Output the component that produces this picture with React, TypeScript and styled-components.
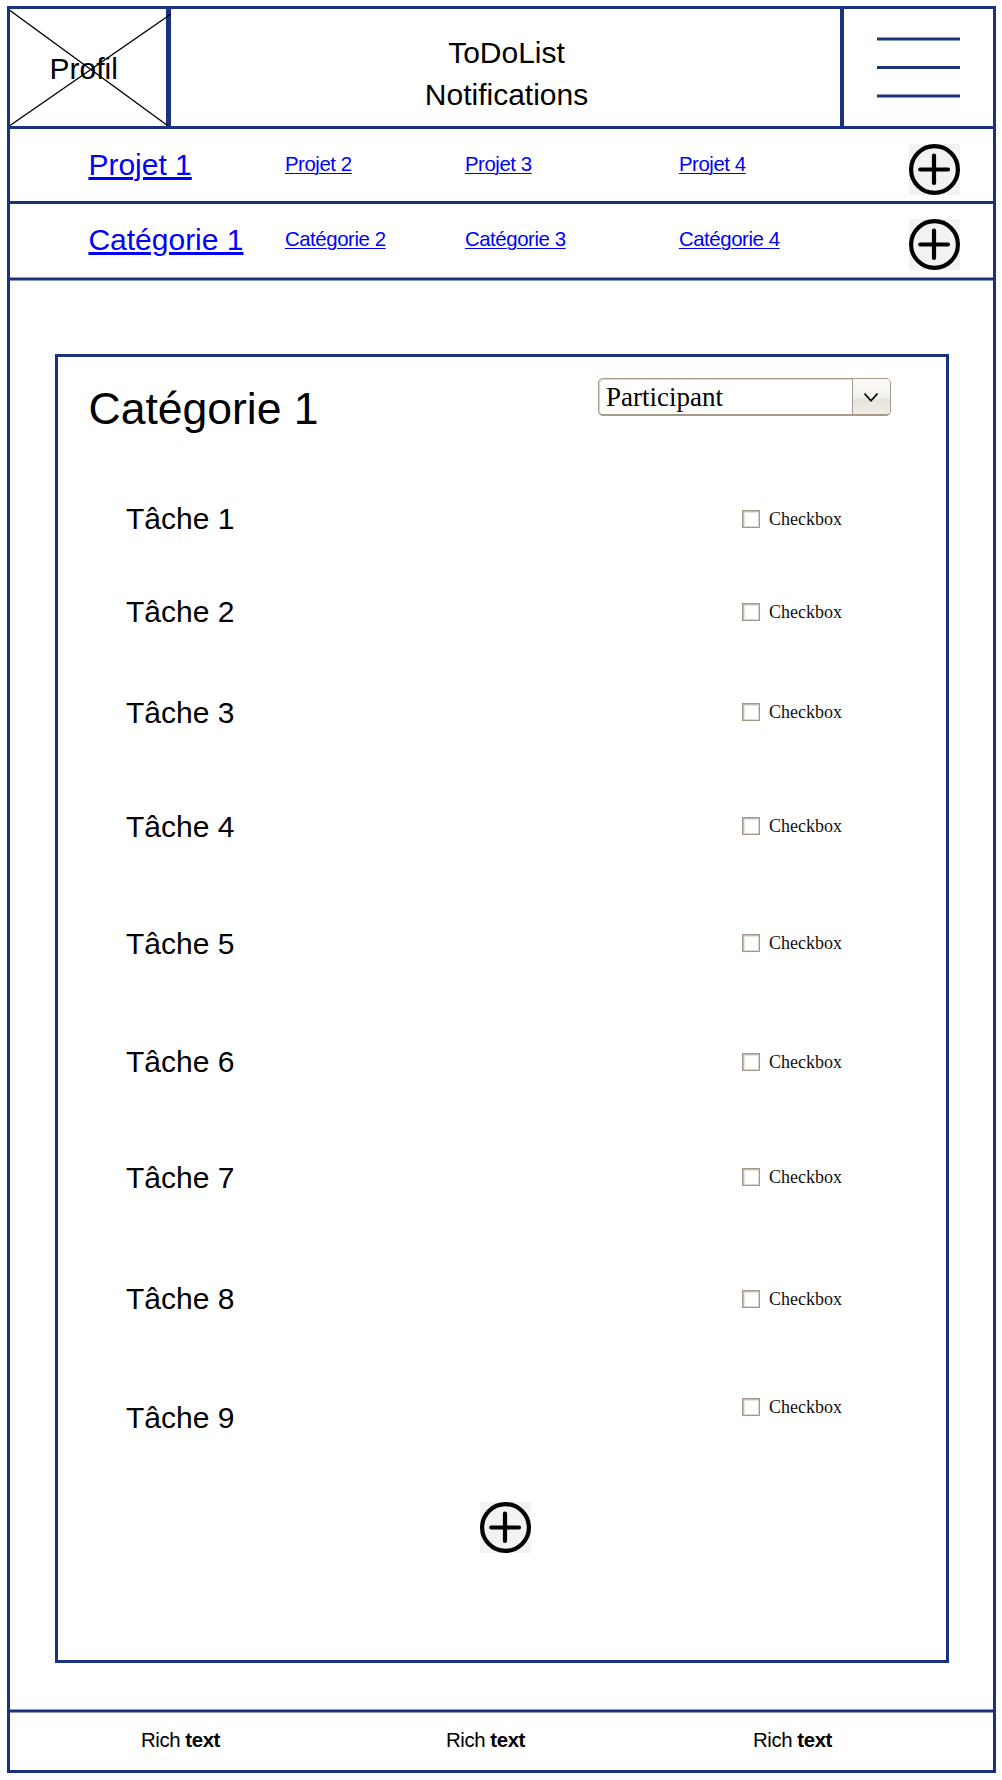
import React from "react";
import styled, { createGlobalStyle } from "styled-components";

const NAVY = "#1b3281";
const SANS = `"Liberation Sans", Arial, sans-serif`;
const SERIF = `"Liberation Serif", "Times New Roman", serif`;

const GlobalStyle = createGlobalStyle`
  * { box-sizing: border-box; }
  body { margin: 0; background: #fff; color: #000; font-family: ${SANS}; }
  h1, h2, p, ul { margin: 0; padding: 0; font-weight: 400; list-style: none; }
  button { border: 0; padding: 0; background: none; }
`;

const Page = styled.div`
  width: 1002px;
  height: 1780px;
  padding: 6px 6px 7px 7px;
`;

const Frame = styled.div`
  display: flex;
  flex-direction: column;
  width: 989px;
  height: 1767px;
  border: 3px solid ${NAVY};
`;

const Header = styled.header`
  display: flex;
  height: 120px;
  border-bottom: 3px solid ${NAVY};
`;

const Profile = styled.div`
  position: relative;
  width: 161px;
  border-right: 5px solid ${NAVY};
  padding: 39px 0 0 39.5px;
  font-size: 30px;
  line-height: 42px;
`;

const Cross = styled.svg`
  position: absolute;
  left: 0;
  top: 0;
  overflow: visible;
`;

const Heading = styled.div`
  width: 669px;
  padding: 23px 0 0 2px;
  text-align: center;
  font-size: 30px;
  line-height: 42px;
`;

const Menu = styled.button`
  display: flex;
  flex: 1;
  flex-direction: column;
  align-items: flex-start;
  gap: 25px;
  padding: 28px 0 0 33px;
  border-left: 4px solid ${NAVY};
`;

const Line = styled.span<{ $soft?: boolean }>`
  display: block;
  flex: none;
  width: 83px;
  height: ${(p) => (p.$soft ? 4 : 3)}px;
  background: ${(p) =>
    p.$soft
      ? `linear-gradient(#8d98c0 1px, ${NAVY} 1px 3px, #8d98c0 3px)`
      : NAVY};
`;

const Divider = styled(Line)`
  width: 100%;
`;

const NavRow = styled.nav<{ $height: number }>`
  display: grid;
  grid-template-columns: 196.5px 180px 214px 1fr 51px;
  height: ${(p) => p.$height}px;
  padding: 0 33px 0 78.4px;
`;

const NavLink = styled.a<{ $active?: boolean }>`
  color: #00f;
  font-size: ${(p) => (p.$active ? 30 : 20.4)}px;
  letter-spacing: ${(p) => (p.$active ? 0 : -0.43)}px;
  line-height: ${(p) => (p.$active ? 42 : 28)}px;
  padding-top: ${(p) => (p.$active ? 14.5 : 21)}px;
  text-decoration: underline;
  text-decoration-thickness: ${(p) => (p.$active ? 3 : 1)}px;
  text-underline-offset: 2px;
  white-space: nowrap;
`;

const AddButton = styled.button`
  display: block;
  width: 51px;
  height: 51px;
  background: #f2f2f2;
`;

const NavAdd = styled(AddButton)`
  margin-top: 15px;
`;

const Main = styled.main`
  flex: 1;
  padding: 73px 44px 46px 45px;
`;

const Card = styled.section`
  width: 894px;
  height: 1309px;
  border: 3px solid ${NAVY};
`;

const CardHeader = styled.div`
  display: flex;
  justify-content: space-between;
  height: 141px;
  padding: 21px 55px 0 30.5px;
`;

const Title = styled.h1`
  font-size: 44.5px;
  line-height: 62px;
`;

const Select = styled.div`
  display: flex;
  width: 293px;
  height: 38px;
  border: 1.5px solid #a69a8a;
  border-bottom-width: 2px;
  border-radius: 5px;
  background: #fff;
  box-shadow: inset 1px 1px 1px #d5d2cc;
  overflow: hidden;
`;

const SelectValue = styled.span`
  flex: 1;
  padding-left: 7px;
  font: 27px/37px ${SERIF};
`;

const SelectArrow = styled.span`
  display: flex;
  align-items: center;
  justify-content: center;
  width: 38px;
  padding: 1px 1px 0 0;
  border-left: 1px solid #a69a8a;
  background: linear-gradient(#fbfaf8, #f3f1ed 50%, #e7e3db 60%, #f0eee9);
`;

const TaskRow = styled.li<{ $height: number; $checkShift?: number }>`
  display: flex;
  justify-content: space-between;
  align-items: flex-start;
  height: ${(p) => p.$height}px;
  padding: 0 103px 0 68px;

  > label {
    margin-top: ${(p) => 10 - (p.$checkShift ?? 0)}px;
  }
`;

const TaskName = styled.span`
  font-size: 30px;
  line-height: 42px;
`;

const Check = styled.label`
  display: flex;
  align-items: center;
  gap: 9px;
  width: 101px;
  height: 22px;
  font: 18px/22px ${SERIF};
  color: #111;
  white-space: nowrap;
`;

const Box = styled.input`
  appearance: none;
  flex: none;
  width: 18px;
  height: 18px;
  margin: 0;
  border: 1px solid #a3978a;
  box-shadow: inset 1px 1px 0 #c4bcb2, inset -1px -1px 0 #ddd7d0,
    inset 2px 2px 0 #e6e4e1;
  background: #fff;
`;

const CardAdd = styled(AddButton)`
  margin-left: 422px;
`;

const Footer = styled.footer`
  display: grid;
  grid-template-columns: 305px 307px 1fr;
  height: 57px;
  padding: 13px 0 0 131px;
  font-size: 20.4px;
  letter-spacing: -0.42px;
  line-height: 28px;
`;

const PlusIcon = () => (
  <svg width="51" height="51" viewBox="0 0 51 51" fill="none" stroke="#000">
    <circle cx="25.5" cy="25.5" r="23.4" strokeWidth="4.2" />
    <path d="M11.2 25.5H39M25 11.5V39" strokeWidth="4.2" strokeLinecap="round" />
  </svg>
);

const projects = ["Projet 1", "Projet 2", "Projet 3", "Projet 4"];
const categories = ["Catégorie 1", "Catégorie 2", "Catégorie 3", "Catégorie 4"];

const tasks = [
  { name: "Tâche 1", height: 93 },
  { name: "Tâche 2", height: 101 },
  { name: "Tâche 3", height: 114, checkShift: 1 },
  { name: "Tâche 4", height: 117, checkShift: 1 },
  { name: "Tâche 5", height: 118, checkShift: 1 },
  { name: "Tâche 6", height: 116 },
  { name: "Tâche 7", height: 121, checkShift: 1 },
  { name: "Tâche 8", height: 119 },
  { name: "Tâche 9", height: 105, checkShift: 11 },
];

const NavBar = ({ items, height }: { items: string[]; height: number }) => (
  <NavRow $height={height}>
    {items.map((item, i) => (
      <NavLink key={item} href="#" $active={i === 0}>
        {item}
      </NavLink>
    ))}
    <NavAdd aria-label="Ajouter">
      <PlusIcon />
    </NavAdd>
  </NavRow>
);

export default function App() {
  return (
    <>
      <GlobalStyle />
      <Page>
        <Frame>
          <Header>
            <Profile>
              Profil
              <Cross width="161" height="117" fill="none" stroke="#000" strokeWidth="1.4">
                <path d="M0 1.5L157.5 116.5M0 116.5L161 5" />
              </Cross>
            </Profile>
            <Heading>
              <p>ToDoList</p>
              <p>Notifications</p>
            </Heading>
            <Menu aria-label="Menu">
              <Line $soft />
              <Line />
              <Line $soft />
            </Menu>
          </Header>
          <NavBar items={projects} height={72} />
          <Divider />
          <NavBar items={categories} height={73} />
          <Divider $soft />
          <Main>
            <Card>
              <CardHeader>
                <Title>Catégorie 1</Title>
                <Select>
                  <SelectValue>Participant</SelectValue>
                  <SelectArrow>
                    <svg width="14" height="9" viewBox="0 0 14 9" fill="none" stroke="#000" strokeWidth="1.6">
                      <path d="M.5 .5L7 7.8L13.5 .5" />
                    </svg>
                  </SelectArrow>
                </Select>
              </CardHeader>
              <ul>
                {tasks.map((t) => (
                  <TaskRow key={t.name} $height={t.height} $checkShift={t.checkShift}>
                    <TaskName>{t.name}</TaskName>
                    <Check>
                      <Box type="checkbox" />
                      Checkbox
                    </Check>
                  </TaskRow>
                ))}
              </ul>
              <CardAdd aria-label="Ajouter une tâche">
                <PlusIcon />
              </CardAdd>
            </Card>
          </Main>
          <Divider $soft />
          <Footer>
            {[0, 1, 2].map((i) => (
              <p key={i}>
                Rich <b>text</b>
              </p>
            ))}
          </Footer>
        </Frame>
      </Page>
    </>
  );
}
